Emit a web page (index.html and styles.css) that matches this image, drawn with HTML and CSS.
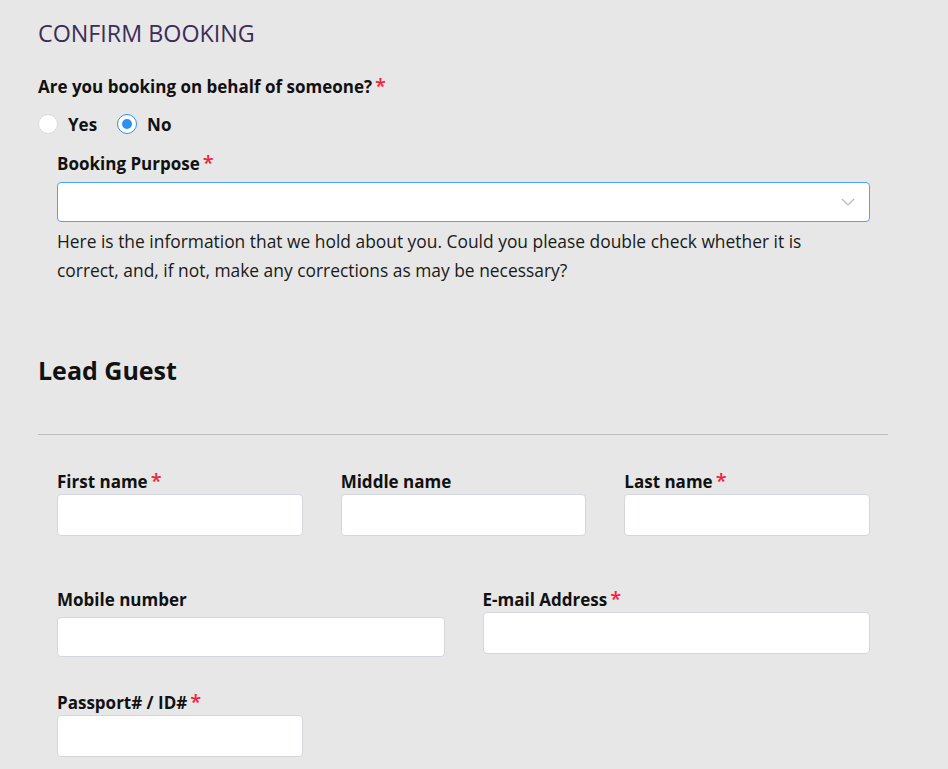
FILE: index.html
```html
<!DOCTYPE html>
<html lang="en">
<head>
  <meta charset="UTF-8" />
  <meta name="viewport" content="width=device-width, initial-scale=1.0" />
  <title>Confirm Booking</title>
  <link rel="stylesheet" href="styles.css">
</head>
<body>
  <div class="page">
    <h1 class="page-title">CONFIRM BOOKING</h1>

    <!-- Behalf question -->
    <p class="question">Are you booking on behalf of someone?<span class="req">*</span></p>
    <div class="radios">
      <label class="radio"><input type="radio" name="behalf" value="yes"><span class="dot"></span>Yes</label>
      <label class="radio"><input type="radio" name="behalf" value="no" checked><span class="dot"></span>No</label>
    </div>

    <div class="indent">
      <label class="field-label" for="purpose">Booking Purpose<span class="req">*</span></label>
      <div class="select-box">
        <select id="purpose"></select>
        <svg class="chevron" width="14" height="8" viewBox="0 0 14 8"><path d="M1 1l6 6 6-6" fill="none" stroke="#b5b5b5" stroke-width="1.2"/></svg>
      </div>
      <p class="info">Here is the information that we hold about you. Could you please double check whether it is correct, and, if not, make any corrections as may be necessary?</p>
    </div>

    <h2 class="section-title">Lead Guest</h2>
    <hr class="divider">

    <!-- Lead guest details -->
    <div class="indent">
      <div class="row three">
        <div class="field">
          <label class="field-label" for="firstName">First name<span class="req">*</span></label>
          <input type="text" id="firstName">
        </div>
        <div class="field">
          <label class="field-label" for="middleName">Middle name</label>
          <input type="text" id="middleName">
        </div>
        <div class="field">
          <label class="field-label" for="lastName">Last name<span class="req">*</span></label>
          <input type="text" id="lastName">
        </div>
      </div>

      <div class="row two">
        <div class="field">
          <label class="field-label" for="mobile">Mobile number</label>
          <input type="tel" id="mobile" class="phone-input">
        </div>
        <div class="field">
          <label class="field-label" for="email">E-mail Address<span class="req">*</span></label>
          <input type="email" id="email">
        </div>
      </div>

      <div class="row three">
        <div class="field">
          <label class="field-label" for="passport">Passport# / ID#<span class="req">*</span></label>
          <input type="text" id="passport">
        </div>
      </div>
    </div>
  </div>
</body>
</html>
```

FILE: styles.css
```css
body {
  margin: 0;
  padding: 0;
  background: #e7e7e7;
  font-family: "Open Sans", "Noto Sans", Arial, sans-serif;
  color: #111;
}

.page {
  width: 850px;
  padding: 18px 0 0 38px;
}

.page-title {
  margin: 0;
  font-size: 23.3px;
  line-height: 30px;
  font-weight: 400;
  color: #3b2d58;
}

.question {
  margin: 26px 0 0;
  padding-top: 1px;
  font-size: 17px;
  line-height: 24px;
  font-weight: 700;
}

.req {
  color: #f5213a;
  margin-left: 3px;
  font-size: 20px;
  line-height: 0;
  font-weight: 600;
}

.radios {
  display: flex;
  gap: 20px;
  margin-top: 13px;
  height: 24px;
  align-items: center;
}

.radio {
  display: flex;
  align-items: center;
  gap: 10px;
  font-size: 17px;
  font-weight: 700;
  cursor: pointer;
}

.radio input {
  display: none;
}

.dot {
  width: 18px;
  height: 18px;
  border-radius: 50%;
  background: #fff;
  border: 1px solid #dcdcdc;
  display: flex;
  align-items: center;
  justify-content: center;
}

.radio input:checked + .dot {
  border-color: #2d8ff0;
}

.radio input:checked + .dot::after {
  content: "";
  width: 10px;
  height: 10px;
  border-radius: 50%;
  background: #2d8ff0;
}

.indent {
  padding: 0 18px 0 19px;
}

.field-label {
  display: block;
  padding-top: 1px;
  font-size: 17px;
  line-height: 24px;
  font-weight: 700;
}

.indent > .field-label {
  margin-top: 15px;
}

.select-box {
  position: relative;
  margin-top: 6px;
}

.select-box select {
  display: block;
  width: 100%;
  height: 40px;
  border: 1px solid #4ba5f5;
  border-radius: 4px;
  background: #fff;
  appearance: none;
  outline: none;
}

.chevron {
  position: absolute;
  right: 15px;
  top: 16px;
}

.info {
  margin: 5px 0 0;
  padding-right: 30px;
  font-size: 17.4px;
  line-height: 29px;
  color: #1a1a1a;
}

.section-title {
  margin: 69px 0 0;
  font-size: 25px;
  line-height: 32px;
  font-weight: 700;
}

.divider {
  margin: 48px 0 0;
  border: none;
  border-top: 1px solid #bdbdbd;
}

.row {
  display: grid;
  column-gap: 38px;
}

.row.three {
  grid-template-columns: repeat(3, 1fr);
}

.row.two {
  grid-template-columns: repeat(2, 1fr);
}

.row:first-child {
  margin-top: 34px;
}

.row + .row {
  margin-top: 51px;
}

.row + .row + .row {
  margin-top: 33px;
}

.field input {
  display: block;
  box-sizing: border-box;
  width: 100%;
  height: 42px;
  margin-top: 0;
  border: 1px solid #d3d6dc;
  border-radius: 4px;
  background: #fff;
  outline: none;
}

.field .phone-input {
  margin-top: 5px;
  height: 40px;
}
```
